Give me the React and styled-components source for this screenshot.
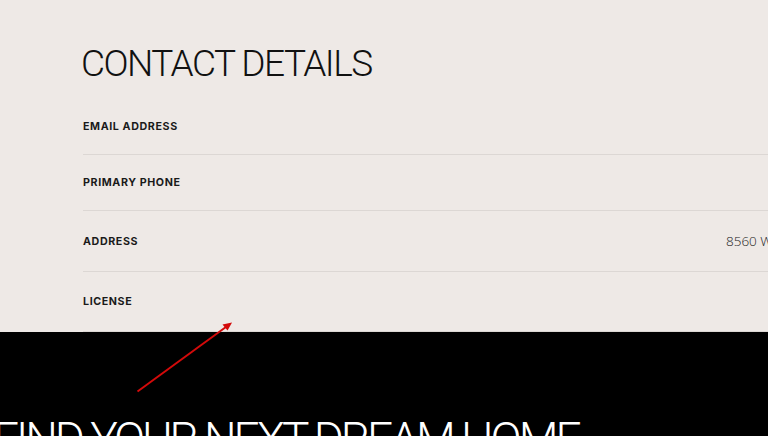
import React from "react";
import styled, { createGlobalStyle } from "styled-components";

const Global = createGlobalStyle`
  html, body { margin: 0; padding: 0; background: #000; overflow: hidden; }
  #root { width: 768px; height: 436px; overflow: hidden; }
`;

const Page = styled.div`
  position: relative;
  width: 768px;
  height: 436px;
  overflow: hidden;
  display: flex;
  flex-direction: column;
`;

const Contact = styled.section`
  background: #eee9e6;
  padding: 45px 0 0 83px;
  display: flex;
  flex-direction: column;
`;

const Heading = styled.h2`
  margin: 0 0 17px -2px;
  font-family: Roboto, "Liberation Sans", sans-serif;
  font-weight: 300;
  font-size: 37px;
  line-height: 1;
  letter-spacing: -1.5px;
  color: #111;
  white-space: nowrap;
`;

const List = styled.div`
  display: flex;
  flex-direction: column;
  width: 1000px;
`;

const Row = styled.div`
  height: ${(p) => p.$h}px;
  display: flex;
  align-items: center;
  justify-content: space-between;
  border-bottom: 1px solid #dcd7d4;
  box-sizing: content-box;
`;

const Label = styled.span`
  font-family: Inter, "Open Sans", sans-serif;
  font-weight: 700;
  font-size: 10.7px;
  letter-spacing: 0.6px;
  color: #1a1a1a;
  text-transform: uppercase;
`;

const Value = styled.span`
  width: 357px;
  font-family: "Open Sans", sans-serif;
  font-weight: 300;
  font-size: 13.5px;
  color: #222;
  white-space: nowrap;
`;

const Banner = styled.section`
  flex: 1;
  background: #000;
  padding: 84px 0 0;
  overflow: hidden;
`;

const BannerTitle = styled.h1`
  margin: 0 0 0 -7px;
  font-family: Roboto, "Liberation Sans", sans-serif;
  font-weight: 300;
  font-size: 46px;
  line-height: 1;
  letter-spacing: -3px;
  color: #fff;
  white-space: nowrap;
`;

const Arrow = styled.svg`
  position: absolute;
  left: 0;
  top: 0;
  pointer-events: none;
`;

const rows = [
  { label: "Email Address", h: 55 },
  { label: "Primary Phone", h: 55 },
  { label: "Address", h: 60, value: "8560 W Sunset Blvd" },
  { label: "License", h: 59 },
];

export default function App() {
  return (
    <>
      <Global />
      <Page>
        <Contact>
          <Heading>CONTACT DETAILS</Heading>
          <List>
            {rows.map((r) => (
              <Row key={r.label} $h={r.h}>
                <Label>{r.label}</Label>
                {r.value && <Value>{r.value}</Value>}
              </Row>
            ))}
          </List>
        </Contact>
        <Banner>
          <BannerTitle>FIND YOUR NEXT DREAM HOME</BannerTitle>
        </Banner>
        <Arrow width="768" height="436" viewBox="0 0 768 436">
          <line x1="137.5" y1="391.5" x2="228" y2="325.5" stroke="#d30a0a" strokeWidth="2" />
          <path d="M232 322.5 L222.5 324.5 L227.5 330.5 Z" fill="#d30a0a" />
        </Arrow>
      </Page>
    </>
  );
}
